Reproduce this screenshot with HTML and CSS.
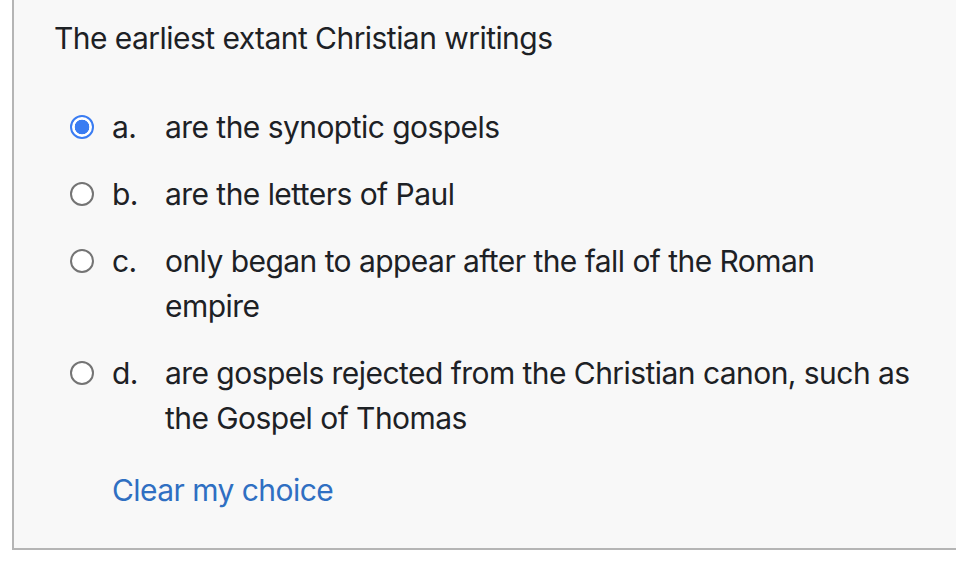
FILE: index.html
```html
<!DOCTYPE html>
<html lang="en">
<head>
<meta charset="utf-8">
<title>Question</title>
<link rel="stylesheet" href="styles.css">
</head>
<body>
<div class="que">
  <div class="qtext">The earliest extant Christian writings</div>
  <div class="answer">
    <div class="row">
      <input type="radio" name="q1" class="radio" checked>
      <span class="num">a.</span>
      <span class="txt">are the synoptic gospels</span>
    </div>
    <div class="row">
      <input type="radio" name="q1" class="radio">
      <span class="num">b.</span>
      <span class="txt">are the letters of Paul</span>
    </div>
    <div class="row">
      <input type="radio" name="q1" class="radio">
      <span class="num">c.</span>
      <span class="txt">only began to appear after the fall of the Roman empire</span>
    </div>
    <div class="row">
      <input type="radio" name="q1" class="radio">
      <span class="num">d.</span>
      <span class="txt">are gospels rejected from the Christian canon, such as the Gospel of Thomas</span>
    </div>
  </div>
  <a class="clear" href="#">Clear my choice</a>
</div>
</body>
</html>
```

FILE: styles.css
```css
html, body {
  margin: 0;
  padding: 0;
  background: #ffffff;
  overflow: hidden;
}

body {
  font-family: Inter, "Noto Sans", sans-serif;
  font-size: 30px;
  line-height: 45px;
  color: #1d2125;
  letter-spacing: -0.55px;
}

.que {
  margin-left: 12px;
  background: #f8f8f8;
  border-left: 2px solid #b5b5b5;
  border-bottom: 2px solid #b5b5b5;
  padding: 16px 0 36px 40px;
  box-sizing: border-box;
  height: 550px;
  display: flex;
  flex-direction: column;
  align-items: flex-start;
}

.qtext {
  margin-bottom: 33px;
}

.answer {
  width: 100%;
  display: flex;
  flex-direction: column;
  margin-bottom: 16px;
}

.row {
  display: flex;
  align-items: flex-start;
  padding: 11px 0 11px 16px;
}

.radio {
  appearance: none;
  -webkit-appearance: none;
  width: 24px;
  height: 24px;
  margin: 10px 18px 0 0;
  border-radius: 50%;
  border: 2px solid #747474;
  background: #ffffff;
  box-sizing: border-box;
  flex: none;
}

.radio:checked {
  border-color: #3a7cf2;
  background: radial-gradient(circle, #3a7cf2 0 7px, #ffffff 7.6px);
}

.num {
  width: 53px;
  flex: none;
}

.txt {
  width: 747px;
}

.clear {
  margin-left: 58px;
  color: #2f6fc2;
  text-decoration: none;
}
```
